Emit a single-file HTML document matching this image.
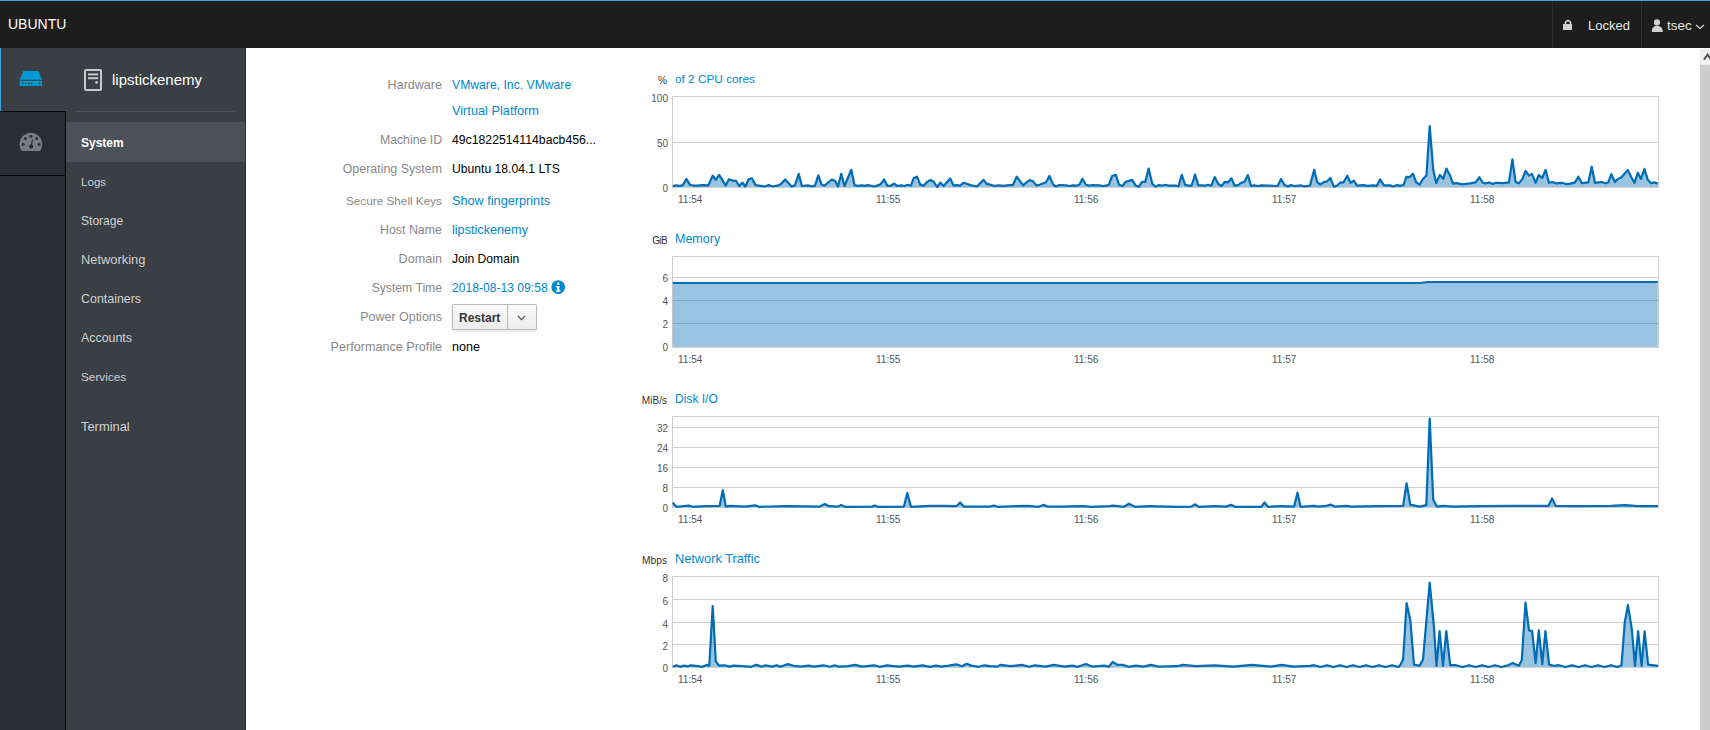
<!DOCTYPE html>
<html><head><meta charset="utf-8">
<style>
*{margin:0;padding:0;box-sizing:border-box}
html,body{width:1710px;height:730px;overflow:hidden;background:#fff;font-family:"Liberation Sans",sans-serif}
.a{position:absolute;white-space:nowrap}
#hdr{position:absolute;left:0;top:0;width:1710px;height:48px;background:#1d1d1d;border-top:1px solid #39a5dc}
.sep{position:absolute;top:0;width:1px;height:47px;background:#2e2e2e}
#iconbar{position:absolute;left:0;top:48px;width:66px;height:682px;background:#292e34;box-shadow:inset -1px 0 0 #030303}
#nav{position:absolute;left:66px;top:48px;width:180px;height:682px;background:#393f44;border-right:1px solid #2b3036}
.nv{position:absolute;left:15px;font-size:12px;color:#d1d1d1;line-height:16px;white-space:nowrap}
.lbl{position:absolute;left:200px;width:242px;font-size:12.4px;color:#888;line-height:16px;text-align:right;white-space:nowrap}
.val{position:absolute;left:452px;font-size:12.2px;color:#000;line-height:16px;white-space:nowrap}
.lnk{color:#0088ce}
.ct{position:absolute;left:675px;font-size:12px;color:#0088ce;line-height:16px;white-space:nowrap}
.cu{position:absolute;left:600px;width:67px;font-size:10px;color:#333;line-height:12px;text-align:right;white-space:nowrap}
.yt{position:absolute;left:638px;font-size:10px;color:#545454;line-height:12px;text-align:right;width:30px}
.xt{position:absolute;font-size:10px;color:#545454;line-height:12px;white-space:nowrap}
</style></head><body>
<div id="hdr">
  <div class="a" style="left:8px;top:13px;font-size:14px;color:#fff;line-height:20px">UBUNTU</div>
  <div class="sep" style="left:1552px"></div>
  <div class="sep" style="left:1641px"></div>
  <svg class="a" style="left:1560px;top:15px" width="16" height="16" viewBox="0 0 16 16">
    <path d="M5.5,8 V6.2 A2.9,3.2 0 0 1 10.5,6.2 V8" fill="none" stroke="#d1d1d1" stroke-width="1.6"/>
    <rect x="3" y="8" width="9" height="6" fill="#d1d1d1"/>
  </svg>
  <div class="a" style="left:1588px;top:17px;font-size:13px;color:#e6e6e6;line-height:16px">Locked</div>
  <svg class="a" style="left:1650px;top:16px" width="16" height="16" viewBox="0 0 16 16">
    <circle cx="7" cy="5.4" r="3.1" fill="#d1d1d1"/>
    <path d="M1.8,15 C1.8,10.5 3.5,9 7,9 C10.5,9 12.8,10.5 12.8,15 Z" fill="#d1d1d1"/>
  </svg>
  <div class="a" style="left:1667px;top:17px;font-size:13.5px;color:#e6e6e6;line-height:16px">tsec</div>
  <svg class="a" style="left:1694px;top:21px" width="12" height="10" viewBox="0 0 12 10">
    <path d="M2,3 L6,6.5 L10,3" fill="none" stroke="#d1d1d1" stroke-width="1.3"/>
  </svg>
</div>
<div id="iconbar">
  <div class="a" style="left:0;top:0;width:66px;height:63px;background:#393f44;border-left:1px solid #39a5dc"></div>
  <div class="a" style="left:0;top:63px;width:66px;height:1px;background:#030303"></div>
  <div class="a" style="left:0;top:127px;width:66px;height:1px;background:#030303"></div>
  <svg class="a" style="left:18px;top:21px" width="26" height="18" viewBox="0 0 26 18">
    <path d="M5.4,2 H20.3 L24,10.7 H1.7 Z" fill="#0099d3"/>
    <rect x="1.7" y="11.8" width="22.3" height="5.1" fill="#0099d3"/>
    <g fill="#393f44"><rect x="3.8" y="13.6" width="1.5" height="1.6"/><rect x="6.9" y="13.6" width="1.5" height="1.6"/><rect x="10" y="13.6" width="1.5" height="1.6"/><rect x="12.8" y="13.6" width="1.5" height="1.6"/><rect x="20.7" y="13.6" width="1.5" height="1.6"/></g>
  </svg>
  <svg class="a" style="left:18px;top:84px" width="26" height="20" viewBox="0 0 26 20">
    <path d="M3.75,19 A11.4,11.4 0 1 1 22.05,19 Z" fill="#7a7c80"/>
    <g fill="#292e34"><circle cx="13" cy="4.3" r="1.5"/><circle cx="7.4" cy="6.5" r="1.5"/><circle cx="18.6" cy="6.5" r="1.5"/><circle cx="5.2" cy="12.2" r="1.5"/><circle cx="21" cy="12.2" r="1.5"/><circle cx="13.1" cy="14.6" r="2.1"/></g>
    <path d="M13,14.6 L14.6,7.3" stroke="#292e34" stroke-width="1.2"/>
  </svg>
</div>
<div id="nav">
  <svg class="a" style="left:17px;top:20px" width="20" height="24" viewBox="0 0 20 24">
    <rect x="2" y="2" width="16" height="20" rx="1" fill="none" stroke="#c8c8c8" stroke-width="2"/>
    <rect x="5" y="5.4" width="10.2" height="2" fill="#c8c8c8"/>
    <rect x="5" y="9.2" width="10.2" height="2" fill="#c8c8c8"/>
    <circle cx="13.6" cy="14.4" r="1.4" fill="#c8c8c8"/>
  </svg>
  <div class="a" style="left:46px;top:22px;font-size:15px;color:#fff;line-height:20px">lipstickenemy</div>
  <div class="a" style="left:10px;top:63px;width:159px;height:1px;background:#4d5258"></div>
  <div class="a" style="left:0;top:74px;width:179px;height:40px;background:#4d5258"></div>
  <div class="nv" style="top:87px;font-weight:bold;color:#fff">System</div>
  <div class="nv" style="top:126px;font-size:11.6px">Logs</div>
  <div class="nv" style="top:165px;font-size:12.05px">Storage</div>
  <div class="nv" style="top:204px;font-size:12.86px">Networking</div>
  <div class="nv" style="top:243px;font-size:12.43px">Containers</div>
  <div class="nv" style="top:282px;font-size:12.4px">Accounts</div>
  <div class="nv" style="top:321px;font-size:11.8px">Services</div>
  <div class="nv" style="top:371px;font-size:12.9px">Terminal</div>
</div>

<div class="lbl" style="top:77px;font-size:12.55px">Hardware</div>
<div class="val lnk" style="top:77px;font-size:12.2px">VMware, Inc. VMware</div>
<div class="val lnk" style="top:103px;font-size:12.76px">Virtual Platform</div>
<div class="lbl" style="top:132px;font-size:12.28px">Machine ID</div>
<div class="val" style="top:132px;font-size:12.24px">49c1822514114bacb456...</div>
<div class="lbl" style="top:161px;font-size:12.41px">Operating System</div>
<div class="val" style="top:161px;font-size:12.17px">Ubuntu 18.04.1 LTS</div>
<div class="lbl" style="top:193px;font-size:11.75px">Secure Shell Keys</div>
<div class="val lnk" style="top:193px;font-size:12.69px">Show fingerprints</div>
<div class="lbl" style="top:222px;font-size:12.42px">Host Name</div>
<div class="val lnk" style="top:222px;font-size:12.66px">lipstickenemy</div>
<div class="lbl" style="top:251px;font-size:12.6px">Domain</div>
<div class="val" style="top:251px;font-size:12.11px">Join Domain</div>
<div class="lbl" style="top:280px;font-size:12.18px">System Time</div>
<div class="val lnk" style="top:280px;font-size:12.12px">2018-08-13 09:58</div>
<svg class="a" style="left:551px;top:280px" width="15" height="15" viewBox="0 0 15 15">
  <circle cx="7.2" cy="7.1" r="6.9" fill="#0088ce"/>
  <rect x="6.1" y="2.6" width="2.3" height="2.2" fill="#fff"/>
  <path d="M4.8,6 H8.4 V10.4 H9.4 V11.8 H4.9 V10.4 H6 V7.3 H4.8 Z" fill="#fff"/>
</svg>
<div class="lbl" style="top:309px;font-size:12.47px">Power Options</div>
<div class="a" style="left:452px;top:304px;width:85px;height:26px;border:1px solid #bbb;border-radius:1px;background:linear-gradient(#fafafa,#ededed);box-shadow:0 2px 3px rgba(3,3,3,0.1)"></div>
<div class="a" style="left:507px;top:305px;width:1px;height:24px;background:#bbb"></div>
<div class="a" style="left:459px;top:310px;font-size:12px;font-weight:bold;color:#363636;line-height:16px">Restart</div>
<svg class="a" style="left:516px;top:314px" width="11" height="8" viewBox="0 0 11 8">
  <path d="M2,2 L5.5,5.6 L9,2" fill="none" stroke="#4d5258" stroke-width="1.2"/>
</svg>
<div class="lbl" style="top:339px;font-size:12.61px">Performance Profile</div>
<div class="val" style="top:339px;font-size:12.54px">none</div>

<svg class="a" style="left:0;top:0" width="1710" height="730" viewBox="0 0 1710 730">
<line x1="672" x2="1658" y1="142.5" y2="142.5" stroke="#d0d0d0" stroke-width="1"/>
<rect x="672.5" y="96.5" width="986" height="91" fill="none" stroke="#d0d0d0" stroke-width="1"/>
<path d="M672.8,186.0 L676.1,185.4 L679.4,185.8 L682.6,185.4 L686.4,179.0 L690.1,184.8 L693.9,185.7 L697.1,185.7 L702.7,185.1 L708.4,185.4 L712.6,175.7 L715.8,179.8 L719.1,174.8 L725.7,185.4 L728.9,179.2 L732.7,180.7 L736.0,180.9 L739.2,186.0 L742.5,182.6 L745.3,186.7 L748.6,179.2 L751.9,178.4 L755.6,185.1 L764.5,186.5 L768.7,185.1 L772.5,186.5 L778.5,185.4 L781.3,183.7 L785.1,179.5 L791.6,186.5 L794.9,185.4 L798.7,173.9 L801.9,186.0 L808.0,185.4 L811.8,186.5 L815.0,185.6 L818.3,175.3 L821.6,184.6 L824.4,185.7 L831.9,179.5 L835.1,180.9 L838.0,186.5 L841.2,173.9 L844.5,186.0 L851.3,169.8 L854.5,185.1 L858.1,185.8 L861.8,185.4 L864.6,185.8 L867.9,185.1 L874.4,186.5 L880.5,184.4 L884.1,179.5 L887.5,186.0 L890.8,185.7 L894.1,183.7 L897.4,186.0 L901.1,185.4 L904.4,186.0 L907.7,184.8 L910.9,185.7 L913.7,178.1 L917.0,176.7 L920.3,184.6 L923.6,185.8 L926.8,182.3 L930.6,179.9 L933.9,182.0 L937.1,187.0 L940.4,182.6 L943.7,186.0 L950.2,178.5 L953.5,185.4 L956.8,185.1 L960.1,185.6 L963.8,182.7 L970.4,185.1 L976.9,186.5 L983.5,179.9 L986.7,183.9 L990.0,184.6 L993.7,185.8 L999.8,185.4 L1003.1,185.8 L1009.6,185.1 L1012.9,185.1 L1016.7,176.7 L1023.2,185.4 L1026.5,182.3 L1029.8,180.1 L1033.0,181.3 L1036.3,185.4 L1039.6,184.8 L1046.1,182.3 L1049.4,176.0 L1053.2,184.6 L1056.0,186.5 L1059.2,185.1 L1065.8,185.4 L1069.5,186.0 L1072.8,185.4 L1076.1,185.7 L1079.4,184.8 L1082.4,178.8 L1085.9,184.8 L1089.2,185.6 L1092.9,185.1 L1099.5,185.4 L1102.7,186.0 L1106.0,185.6 L1108.8,184.8 L1112.1,176.0 L1115.8,174.8 L1119.1,184.8 L1122.4,186.0 L1125.7,181.8 L1128.9,180.9 L1132.2,179.9 L1135.5,185.4 L1138.8,186.8 L1142.0,181.8 L1145.3,181.8 L1148.6,168.5 L1152.3,183.7 L1155.6,186.7 L1158.9,185.1 L1162.2,185.7 L1165.4,184.8 L1168.7,185.6 L1175.3,185.6 L1178.5,186.3 L1181.8,174.8 L1185.1,184.8 L1188.4,185.6 L1191.6,185.6 L1195.1,174.5 L1198.2,185.1 L1204.3,185.7 L1208.0,184.8 L1211.3,185.7 L1214.7,177.1 L1218.3,183.9 L1221.6,186.0 L1224.9,181.8 L1228.1,182.3 L1231.4,178.3 L1234.7,185.7 L1238.0,185.1 L1241.2,182.9 L1244.5,181.8 L1247.8,175.1 L1251.1,186.0 L1254.3,185.4 L1258.1,186.0 L1261.3,185.4 L1267.9,185.6 L1277.7,186.0 L1281.0,179.0 L1284.7,185.1 L1288.0,186.5 L1290.8,185.1 L1294.6,186.0 L1300.6,185.4 L1303.9,186.3 L1310.0,185.6 L1314.2,169.7 L1317.1,182.1 L1320.4,184.5 L1323.7,182.1 L1327.0,181.5 L1330.3,177.9 L1333.9,186.7 L1336.8,185.8 L1340.7,182.3 L1343.4,182.5 L1347.3,175.8 L1350.5,182.9 L1353.8,180.7 L1357.1,185.6 L1363.7,185.1 L1367.5,185.8 L1373.6,185.4 L1376.8,185.8 L1380.1,179.3 L1384.0,185.4 L1390.0,185.4 L1393.3,186.5 L1397.1,185.1 L1400.4,185.8 L1403.7,184.7 L1406.4,176.8 L1409.7,177.1 L1413.0,173.8 L1416.3,182.5 L1419.6,184.5 L1422.9,179.0 L1426.4,175.5 L1429.7,126.2 L1433.3,170.3 L1436.2,182.9 L1439.9,174.9 L1443.2,178.8 L1446.4,168.6 L1449.7,174.7 L1453.0,183.6 L1456.8,183.2 L1462.3,184.3 L1470.0,183.3 L1475.6,182.4 L1479.4,177.2 L1482.8,182.8 L1486.1,183.3 L1489.4,182.4 L1492.8,183.9 L1496.1,182.8 L1503.3,183.1 L1508.9,182.4 L1512.4,159.4 L1515.6,182.0 L1518.9,183.3 L1522.2,179.4 L1525.6,170.9 L1528.9,175.6 L1532.0,173.9 L1535.6,182.8 L1538.9,175.0 L1542.2,178.0 L1545.6,169.8 L1548.9,182.8 L1552.2,182.0 L1556.1,183.3 L1562.2,182.8 L1566.7,184.2 L1570.6,183.6 L1575.0,182.4 L1578.3,176.7 L1581.7,183.1 L1588.3,182.4 L1591.7,166.7 L1595.0,182.8 L1601.7,182.0 L1605.6,183.3 L1608.3,182.4 L1611.3,174.2 L1615.0,182.0 L1617.8,178.9 L1621.1,177.6 L1624.4,173.9 L1627.8,170.0 L1631.1,176.7 L1634.4,182.8 L1637.8,172.8 L1640.9,178.9 L1644.4,168.9 L1647.8,179.8 L1651.1,183.3 L1654.4,182.4 L1657.8,183.6 L1657.8,187 L672.8,187 Z" fill="rgba(0,108,180,0.4)" stroke="none"/>
<path d="M672.8,186.0 L676.1,185.4 L679.4,185.8 L682.6,185.4 L686.4,179.0 L690.1,184.8 L693.9,185.7 L697.1,185.7 L702.7,185.1 L708.4,185.4 L712.6,175.7 L715.8,179.8 L719.1,174.8 L725.7,185.4 L728.9,179.2 L732.7,180.7 L736.0,180.9 L739.2,186.0 L742.5,182.6 L745.3,186.7 L748.6,179.2 L751.9,178.4 L755.6,185.1 L764.5,186.5 L768.7,185.1 L772.5,186.5 L778.5,185.4 L781.3,183.7 L785.1,179.5 L791.6,186.5 L794.9,185.4 L798.7,173.9 L801.9,186.0 L808.0,185.4 L811.8,186.5 L815.0,185.6 L818.3,175.3 L821.6,184.6 L824.4,185.7 L831.9,179.5 L835.1,180.9 L838.0,186.5 L841.2,173.9 L844.5,186.0 L851.3,169.8 L854.5,185.1 L858.1,185.8 L861.8,185.4 L864.6,185.8 L867.9,185.1 L874.4,186.5 L880.5,184.4 L884.1,179.5 L887.5,186.0 L890.8,185.7 L894.1,183.7 L897.4,186.0 L901.1,185.4 L904.4,186.0 L907.7,184.8 L910.9,185.7 L913.7,178.1 L917.0,176.7 L920.3,184.6 L923.6,185.8 L926.8,182.3 L930.6,179.9 L933.9,182.0 L937.1,187.0 L940.4,182.6 L943.7,186.0 L950.2,178.5 L953.5,185.4 L956.8,185.1 L960.1,185.6 L963.8,182.7 L970.4,185.1 L976.9,186.5 L983.5,179.9 L986.7,183.9 L990.0,184.6 L993.7,185.8 L999.8,185.4 L1003.1,185.8 L1009.6,185.1 L1012.9,185.1 L1016.7,176.7 L1023.2,185.4 L1026.5,182.3 L1029.8,180.1 L1033.0,181.3 L1036.3,185.4 L1039.6,184.8 L1046.1,182.3 L1049.4,176.0 L1053.2,184.6 L1056.0,186.5 L1059.2,185.1 L1065.8,185.4 L1069.5,186.0 L1072.8,185.4 L1076.1,185.7 L1079.4,184.8 L1082.4,178.8 L1085.9,184.8 L1089.2,185.6 L1092.9,185.1 L1099.5,185.4 L1102.7,186.0 L1106.0,185.6 L1108.8,184.8 L1112.1,176.0 L1115.8,174.8 L1119.1,184.8 L1122.4,186.0 L1125.7,181.8 L1128.9,180.9 L1132.2,179.9 L1135.5,185.4 L1138.8,186.8 L1142.0,181.8 L1145.3,181.8 L1148.6,168.5 L1152.3,183.7 L1155.6,186.7 L1158.9,185.1 L1162.2,185.7 L1165.4,184.8 L1168.7,185.6 L1175.3,185.6 L1178.5,186.3 L1181.8,174.8 L1185.1,184.8 L1188.4,185.6 L1191.6,185.6 L1195.1,174.5 L1198.2,185.1 L1204.3,185.7 L1208.0,184.8 L1211.3,185.7 L1214.7,177.1 L1218.3,183.9 L1221.6,186.0 L1224.9,181.8 L1228.1,182.3 L1231.4,178.3 L1234.7,185.7 L1238.0,185.1 L1241.2,182.9 L1244.5,181.8 L1247.8,175.1 L1251.1,186.0 L1254.3,185.4 L1258.1,186.0 L1261.3,185.4 L1267.9,185.6 L1277.7,186.0 L1281.0,179.0 L1284.7,185.1 L1288.0,186.5 L1290.8,185.1 L1294.6,186.0 L1300.6,185.4 L1303.9,186.3 L1310.0,185.6 L1314.2,169.7 L1317.1,182.1 L1320.4,184.5 L1323.7,182.1 L1327.0,181.5 L1330.3,177.9 L1333.9,186.7 L1336.8,185.8 L1340.7,182.3 L1343.4,182.5 L1347.3,175.8 L1350.5,182.9 L1353.8,180.7 L1357.1,185.6 L1363.7,185.1 L1367.5,185.8 L1373.6,185.4 L1376.8,185.8 L1380.1,179.3 L1384.0,185.4 L1390.0,185.4 L1393.3,186.5 L1397.1,185.1 L1400.4,185.8 L1403.7,184.7 L1406.4,176.8 L1409.7,177.1 L1413.0,173.8 L1416.3,182.5 L1419.6,184.5 L1422.9,179.0 L1426.4,175.5 L1429.7,126.2 L1433.3,170.3 L1436.2,182.9 L1439.9,174.9 L1443.2,178.8 L1446.4,168.6 L1449.7,174.7 L1453.0,183.6 L1456.8,183.2 L1462.3,184.3 L1470.0,183.3 L1475.6,182.4 L1479.4,177.2 L1482.8,182.8 L1486.1,183.3 L1489.4,182.4 L1492.8,183.9 L1496.1,182.8 L1503.3,183.1 L1508.9,182.4 L1512.4,159.4 L1515.6,182.0 L1518.9,183.3 L1522.2,179.4 L1525.6,170.9 L1528.9,175.6 L1532.0,173.9 L1535.6,182.8 L1538.9,175.0 L1542.2,178.0 L1545.6,169.8 L1548.9,182.8 L1552.2,182.0 L1556.1,183.3 L1562.2,182.8 L1566.7,184.2 L1570.6,183.6 L1575.0,182.4 L1578.3,176.7 L1581.7,183.1 L1588.3,182.4 L1591.7,166.7 L1595.0,182.8 L1601.7,182.0 L1605.6,183.3 L1608.3,182.4 L1611.3,174.2 L1615.0,182.0 L1617.8,178.9 L1621.1,177.6 L1624.4,173.9 L1627.8,170.0 L1631.1,176.7 L1634.4,182.8 L1637.8,172.8 L1640.9,178.9 L1644.4,168.9 L1647.8,179.8 L1651.1,183.3 L1654.4,182.4 L1657.8,183.6" fill="none" stroke="#006cb4" stroke-width="2.2" stroke-linejoin="round"/>
<line x1="672" x2="1658" y1="277.5" y2="277.5" stroke="#d0d0d0" stroke-width="1"/>
<line x1="672" x2="1658" y1="300.5" y2="300.5" stroke="#d0d0d0" stroke-width="1"/>
<line x1="672" x2="1658" y1="323.5" y2="323.5" stroke="#d0d0d0" stroke-width="1"/>
<rect x="672.5" y="256.5" width="986" height="91" fill="none" stroke="#d0d0d0" stroke-width="1"/>
<path d="M672.8,283.0 L1420.0,283.0 L1428.0,282.0 L1657.8,282.0 L1657.8,347 L672.8,347 Z" fill="rgba(0,108,180,0.4)" stroke="none"/>
<path d="M672.8,283.0 L1420.0,283.0 L1428.0,282.0 L1657.8,282.0" fill="none" stroke="#006cb4" stroke-width="2.2" stroke-linejoin="round"/>
<line x1="672" x2="1658" y1="427.5" y2="427.5" stroke="#d0d0d0" stroke-width="1"/>
<line x1="672" x2="1658" y1="447.5" y2="447.5" stroke="#d0d0d0" stroke-width="1"/>
<line x1="672" x2="1658" y1="467.5" y2="467.5" stroke="#d0d0d0" stroke-width="1"/>
<line x1="672" x2="1658" y1="487.5" y2="487.5" stroke="#d0d0d0" stroke-width="1"/>
<rect x="672.5" y="416.5" width="986" height="91" fill="none" stroke="#d0d0d0" stroke-width="1"/>
<path d="M672.8,502.8 L676.5,506.8 L688.7,505.6 L692.5,506.8 L705.6,506.2 L719.6,505.8 L722.8,490.3 L725.8,506.6 L729.9,505.8 L744.9,506.6 L755.1,505.3 L758.9,506.8 L786.0,506.2 L819.7,506.6 L824.9,504.0 L829.1,506.2 L838.4,506.6 L841.2,504.9 L845.0,506.8 L872.1,506.6 L874.9,505.6 L877.7,506.8 L903.9,506.6 L907.3,493.1 L911.0,506.8 L930.1,505.8 L943.2,505.8 L956.3,506.2 L960.1,502.5 L963.8,506.6 L990.0,506.6 L993.7,505.6 L997.5,506.8 L1016.2,506.2 L1027.4,505.8 L1038.7,506.8 L1043.3,504.9 L1048.0,506.6 L1059.2,506.6 L1083.6,506.2 L1091.1,506.8 L1109.8,506.2 L1113.5,505.6 L1123.8,506.8 L1128.9,503.8 L1135.0,506.8 L1149.1,506.2 L1177.1,506.8 L1191.2,506.6 L1195.3,504.3 L1198.7,506.8 L1214.6,506.2 L1225.8,506.6 L1231.4,504.9 L1235.1,506.8 L1261.3,506.8 L1264.5,502.5 L1267.9,506.8 L1281.9,506.2 L1294.1,506.6 L1297.5,492.7 L1300.6,506.8 L1314.1,505.8 L1318.2,506.6 L1326.4,505.8 L1330.5,504.6 L1334.6,506.6 L1346.8,505.8 L1350.9,506.6 L1379.6,506.2 L1403.1,505.8 L1406.6,483.3 L1410.3,504.6 L1419.5,506.6 L1426.3,505.2 L1429.7,418.6 L1433.2,499.6 L1436.9,506.6 L1443.0,505.8 L1453.3,506.6 L1479.9,506.2 L1512.6,505.8 L1548.5,505.8 L1552.1,498.4 L1555.6,505.8 L1576.1,506.2 L1610.9,505.8 L1625.2,505.2 L1637.5,506.2 L1658.0,506.2 L1658.0,507 L672.8,507 Z" fill="rgba(0,108,180,0.4)" stroke="none"/>
<path d="M672.8,502.8 L676.5,506.8 L688.7,505.6 L692.5,506.8 L705.6,506.2 L719.6,505.8 L722.8,490.3 L725.8,506.6 L729.9,505.8 L744.9,506.6 L755.1,505.3 L758.9,506.8 L786.0,506.2 L819.7,506.6 L824.9,504.0 L829.1,506.2 L838.4,506.6 L841.2,504.9 L845.0,506.8 L872.1,506.6 L874.9,505.6 L877.7,506.8 L903.9,506.6 L907.3,493.1 L911.0,506.8 L930.1,505.8 L943.2,505.8 L956.3,506.2 L960.1,502.5 L963.8,506.6 L990.0,506.6 L993.7,505.6 L997.5,506.8 L1016.2,506.2 L1027.4,505.8 L1038.7,506.8 L1043.3,504.9 L1048.0,506.6 L1059.2,506.6 L1083.6,506.2 L1091.1,506.8 L1109.8,506.2 L1113.5,505.6 L1123.8,506.8 L1128.9,503.8 L1135.0,506.8 L1149.1,506.2 L1177.1,506.8 L1191.2,506.6 L1195.3,504.3 L1198.7,506.8 L1214.6,506.2 L1225.8,506.6 L1231.4,504.9 L1235.1,506.8 L1261.3,506.8 L1264.5,502.5 L1267.9,506.8 L1281.9,506.2 L1294.1,506.6 L1297.5,492.7 L1300.6,506.8 L1314.1,505.8 L1318.2,506.6 L1326.4,505.8 L1330.5,504.6 L1334.6,506.6 L1346.8,505.8 L1350.9,506.6 L1379.6,506.2 L1403.1,505.8 L1406.6,483.3 L1410.3,504.6 L1419.5,506.6 L1426.3,505.2 L1429.7,418.6 L1433.2,499.6 L1436.9,506.6 L1443.0,505.8 L1453.3,506.6 L1479.9,506.2 L1512.6,505.8 L1548.5,505.8 L1552.1,498.4 L1555.6,505.8 L1576.1,506.2 L1610.9,505.8 L1625.2,505.2 L1637.5,506.2 L1658.0,506.2" fill="none" stroke="#006cb4" stroke-width="2.2" stroke-linejoin="round"/>
<line x1="672" x2="1658" y1="599.5" y2="599.5" stroke="#d0d0d0" stroke-width="1"/>
<line x1="672" x2="1658" y1="622.5" y2="622.5" stroke="#d0d0d0" stroke-width="1"/>
<line x1="672" x2="1658" y1="644.5" y2="644.5" stroke="#d0d0d0" stroke-width="1"/>
<rect x="672.5" y="576.5" width="986" height="91" fill="none" stroke="#d0d0d0" stroke-width="1"/>
<path d="M672.8,666.8 L676.5,665.3 L680.3,666.8 L684.0,665.6 L687.8,666.4 L690.6,665.3 L698.1,666.2 L702.7,666.8 L706.5,664.9 L709.3,665.6 L712.7,606.0 L715.8,661.5 L719.0,665.6 L724.3,665.3 L729.9,666.6 L733.6,665.6 L743.0,666.2 L751.4,666.8 L756.1,664.7 L761.7,666.6 L765.4,665.3 L772.0,666.6 L776.7,665.3 L780.4,666.8 L787.9,664.0 L793.5,665.8 L801.0,666.6 L808.5,665.6 L814.1,666.6 L823.5,665.3 L830.0,666.8 L834.7,665.3 L838.4,666.6 L847.8,666.2 L855.3,664.9 L861.8,666.6 L874.0,665.3 L879.6,666.8 L887.1,665.3 L898.3,666.6 L907.7,665.6 L913.3,666.6 L922.6,665.3 L930.1,666.8 L935.7,665.6 L941.3,666.6 L948.8,665.6 L956.3,664.3 L961.9,666.2 L966.6,663.8 L971.3,665.6 L978.8,666.8 L984.4,665.3 L990.0,666.2 L997.5,666.6 L1000.3,664.9 L1010.6,666.2 L1021.8,664.9 L1029.3,666.8 L1034.9,665.3 L1046.1,666.6 L1053.6,664.9 L1064.9,666.6 L1072.3,665.6 L1078.0,666.8 L1085.8,664.0 L1092.0,666.6 L1104.2,665.6 L1108.8,666.8 L1112.6,661.9 L1117.3,664.7 L1122.9,664.9 L1128.5,666.8 L1136.0,665.6 L1143.5,666.6 L1150.9,664.9 L1158.4,666.6 L1177.1,666.2 L1182.7,664.9 L1195.8,666.2 L1214.6,665.3 L1233.3,666.6 L1252.0,664.9 L1270.7,666.6 L1281.9,664.9 L1293.2,666.6 L1310.0,665.8 L1314.0,665.2 L1320.5,667.0 L1327.0,665.2 L1333.5,667.0 L1340.0,665.2 L1346.5,667.0 L1353.0,665.2 L1359.5,667.0 L1366.0,665.2 L1372.5,667.0 L1379.0,665.2 L1385.5,667.0 L1392.0,665.2 L1398.5,667.0 L1400.1,665.2 L1403.1,659.6 L1406.6,603.2 L1410.3,620.1 L1414.0,664.6 L1419.5,665.8 L1423.0,659.6 L1429.7,582.7 L1433.8,625.3 L1436.5,665.8 L1439.6,631.0 L1443.0,665.8 L1446.3,631.0 L1450.2,665.2 L1456.0,665.2 L1462.5,667.0 L1469.0,665.2 L1475.5,667.0 L1482.0,665.2 L1488.5,667.0 L1495.0,665.2 L1501.5,667.0 L1508.0,665.2 L1512.6,663.1 L1518.8,665.8 L1521.8,660.1 L1525.5,602.7 L1529.0,630.4 L1532.1,631.0 L1535.6,663.1 L1538.8,630.4 L1542.3,664.2 L1545.4,631.0 L1549.1,664.6 L1553.6,665.8 L1559.0,665.2 L1565.5,667.0 L1572.0,665.2 L1578.5,667.0 L1585.0,665.2 L1591.5,667.0 L1598.0,665.2 L1604.5,667.0 L1611.0,665.2 L1617.5,667.0 L1621.5,665.2 L1624.8,622.2 L1627.9,605.2 L1631.8,628.9 L1635.0,665.8 L1638.1,631.0 L1641.6,665.8 L1644.6,631.4 L1648.1,664.6 L1658.0,665.8 L1658.0,667 L672.8,667 Z" fill="rgba(0,108,180,0.4)" stroke="none"/>
<path d="M672.8,666.8 L676.5,665.3 L680.3,666.8 L684.0,665.6 L687.8,666.4 L690.6,665.3 L698.1,666.2 L702.7,666.8 L706.5,664.9 L709.3,665.6 L712.7,606.0 L715.8,661.5 L719.0,665.6 L724.3,665.3 L729.9,666.6 L733.6,665.6 L743.0,666.2 L751.4,666.8 L756.1,664.7 L761.7,666.6 L765.4,665.3 L772.0,666.6 L776.7,665.3 L780.4,666.8 L787.9,664.0 L793.5,665.8 L801.0,666.6 L808.5,665.6 L814.1,666.6 L823.5,665.3 L830.0,666.8 L834.7,665.3 L838.4,666.6 L847.8,666.2 L855.3,664.9 L861.8,666.6 L874.0,665.3 L879.6,666.8 L887.1,665.3 L898.3,666.6 L907.7,665.6 L913.3,666.6 L922.6,665.3 L930.1,666.8 L935.7,665.6 L941.3,666.6 L948.8,665.6 L956.3,664.3 L961.9,666.2 L966.6,663.8 L971.3,665.6 L978.8,666.8 L984.4,665.3 L990.0,666.2 L997.5,666.6 L1000.3,664.9 L1010.6,666.2 L1021.8,664.9 L1029.3,666.8 L1034.9,665.3 L1046.1,666.6 L1053.6,664.9 L1064.9,666.6 L1072.3,665.6 L1078.0,666.8 L1085.8,664.0 L1092.0,666.6 L1104.2,665.6 L1108.8,666.8 L1112.6,661.9 L1117.3,664.7 L1122.9,664.9 L1128.5,666.8 L1136.0,665.6 L1143.5,666.6 L1150.9,664.9 L1158.4,666.6 L1177.1,666.2 L1182.7,664.9 L1195.8,666.2 L1214.6,665.3 L1233.3,666.6 L1252.0,664.9 L1270.7,666.6 L1281.9,664.9 L1293.2,666.6 L1310.0,665.8 L1314.0,665.2 L1320.5,667.0 L1327.0,665.2 L1333.5,667.0 L1340.0,665.2 L1346.5,667.0 L1353.0,665.2 L1359.5,667.0 L1366.0,665.2 L1372.5,667.0 L1379.0,665.2 L1385.5,667.0 L1392.0,665.2 L1398.5,667.0 L1400.1,665.2 L1403.1,659.6 L1406.6,603.2 L1410.3,620.1 L1414.0,664.6 L1419.5,665.8 L1423.0,659.6 L1429.7,582.7 L1433.8,625.3 L1436.5,665.8 L1439.6,631.0 L1443.0,665.8 L1446.3,631.0 L1450.2,665.2 L1456.0,665.2 L1462.5,667.0 L1469.0,665.2 L1475.5,667.0 L1482.0,665.2 L1488.5,667.0 L1495.0,665.2 L1501.5,667.0 L1508.0,665.2 L1512.6,663.1 L1518.8,665.8 L1521.8,660.1 L1525.5,602.7 L1529.0,630.4 L1532.1,631.0 L1535.6,663.1 L1538.8,630.4 L1542.3,664.2 L1545.4,631.0 L1549.1,664.6 L1553.6,665.8 L1559.0,665.2 L1565.5,667.0 L1572.0,665.2 L1578.5,667.0 L1585.0,665.2 L1591.5,667.0 L1598.0,665.2 L1604.5,667.0 L1611.0,665.2 L1617.5,667.0 L1621.5,665.2 L1624.8,622.2 L1627.9,605.2 L1631.8,628.9 L1635.0,665.8 L1638.1,631.0 L1641.6,665.8 L1644.6,631.4 L1648.1,664.6 L1658.0,665.8" fill="none" stroke="#006cb4" stroke-width="2.2" stroke-linejoin="round"/>
</svg>
<div class="cu" style="top:75px;font-size:10px;">%</div>
<div class="ct" style="top:71px;font-size:11.8px">of 2 CPU cores</div>
<div class="yt" style="top:93px">100</div>
<div class="yt" style="top:138px">50</div>
<div class="yt" style="top:183px">0</div>
<div class="xt" style="left:678px;top:194px">11:54</div>
<div class="xt" style="left:876px;top:194px">11:55</div>
<div class="xt" style="left:1074px;top:194px">11:56</div>
<div class="xt" style="left:1272px;top:194px">11:57</div>
<div class="xt" style="left:1470px;top:194px">11:58</div>
<div class="cu" style="top:235px;font-size:10px;letter-spacing:-0.6px;">GiB</div>
<div class="ct" style="top:231px;font-size:12.5px">Memory</div>
<div class="yt" style="top:273px">6</div>
<div class="yt" style="top:296px">4</div>
<div class="yt" style="top:319px">2</div>
<div class="yt" style="top:342px">0</div>
<div class="xt" style="left:678px;top:354px">11:54</div>
<div class="xt" style="left:876px;top:354px">11:55</div>
<div class="xt" style="left:1074px;top:354px">11:56</div>
<div class="xt" style="left:1272px;top:354px">11:57</div>
<div class="xt" style="left:1470px;top:354px">11:58</div>
<div class="cu" style="top:395px;font-size:10.1px;">MiB/s</div>
<div class="ct" style="top:391px;font-size:12.04px">Disk I/O</div>
<div class="yt" style="top:423px">32</div>
<div class="yt" style="top:443px">24</div>
<div class="yt" style="top:463px">16</div>
<div class="yt" style="top:483px">8</div>
<div class="yt" style="top:503px">0</div>
<div class="xt" style="left:678px;top:514px">11:54</div>
<div class="xt" style="left:876px;top:514px">11:55</div>
<div class="xt" style="left:1074px;top:514px">11:56</div>
<div class="xt" style="left:1272px;top:514px">11:57</div>
<div class="xt" style="left:1470px;top:514px">11:58</div>
<div class="cu" style="top:555px;font-size:10.2px;">Mbps</div>
<div class="ct" style="top:551px;font-size:12.78px">Network Traffic</div>
<div class="yt" style="top:573px">8</div>
<div class="yt" style="top:596px">6</div>
<div class="yt" style="top:619px">4</div>
<div class="yt" style="top:641px">2</div>
<div class="yt" style="top:663px">0</div>
<div class="xt" style="left:678px;top:674px">11:54</div>
<div class="xt" style="left:876px;top:674px">11:55</div>
<div class="xt" style="left:1074px;top:674px">11:56</div>
<div class="xt" style="left:1272px;top:674px">11:57</div>
<div class="xt" style="left:1470px;top:674px">11:58</div>

<div class="a" style="left:1700px;top:49px;width:10px;height:681px;background:#f0f0f0"></div>
<div class="a" style="left:1700px;top:65px;width:10px;height:665px;background:#cdcdcd"></div>
<svg class="a" style="left:1700px;top:50px" width="10" height="12" viewBox="0 0 10 12">
  <path d="M4,9.6 L7.6,4.6 L11.2,9.6" fill="none" stroke="#505050" stroke-width="2"/>
</svg>
</body></html>
